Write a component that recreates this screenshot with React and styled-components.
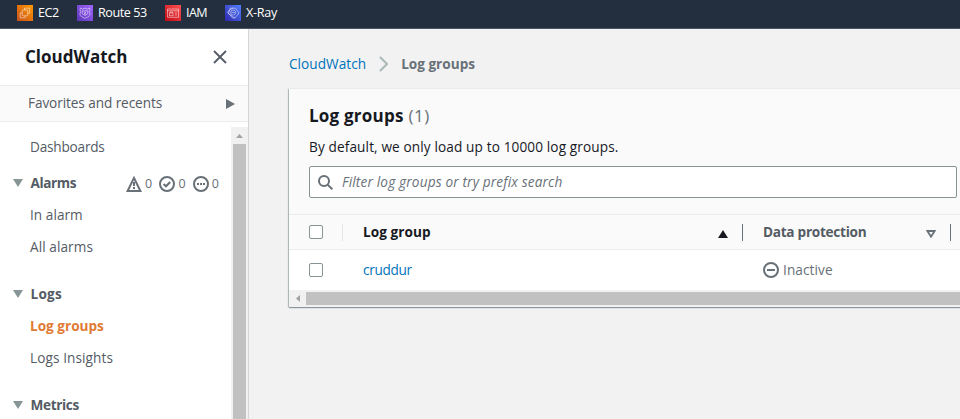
import React from 'react';
import styled, { createGlobalStyle } from 'styled-components';

const Global = createGlobalStyle`
  * { box-sizing: border-box; }
  body { margin: 0; background: #f2f2f2; overflow: hidden; font-family: "Open Sans", sans-serif; }
`;

const Page = styled.div`
  display: flex;
  flex-direction: column;
  width: 960px;
  height: 419px;
  overflow: hidden;
  font-size: 13.6px;
  line-height: 20px;
  color: #16191f;
`;
const Text = styled.span`
  white-space: nowrap;
  letter-spacing: ${(p) => p.$track || 0}px;
`;
const TopBar = styled.nav`
  display: flex;
  flex: 0 0 29px;
  padding: 3px 0 0 17px;
  background: #232f3e;
  border-bottom: 1px solid #4f5566;
  color: #fff;
  font-size: 12.6px;
`;
const Service = styled.div`
  display: flex;
  align-items: center;
  gap: 5px;
  height: 20px;
  width: ${(p) => p.$width}px;
`;
const Body = styled.div`
  display: flex;
  flex: 1;
  min-height: 0;
`;
const Sidebar = styled.aside`
  display: flex;
  flex-direction: column;
  flex: 0 0 249px;
  background: #fff;
  border-right: 1px solid #d5d8d8;
`;
const SideHeader = styled.header`
  display: flex;
  align-items: center;
  justify-content: space-between;
  flex: 0 0 57px;
  padding: 0 21px 1px 25px;
  border-bottom: 1px solid #eaeded;
`;
const SideTitle = styled.h2`
  margin: 0;
  font-size: 17px;
  line-height: 24px;
`;
const Favorites = styled.div`
  display: flex;
  align-items: center;
  justify-content: space-between;
  flex: 0 0 36px;
  padding: 0 13px 0 28px;
  background: #fafafa;
  border-bottom: 1px solid #eaeded;
  color: #545b64;
`;
const FavoritesLabel = styled(Text)`
  padding-bottom: 2px;
`;
const SideScroll = styled.div`
  display: flex;
  flex: 1;
  min-height: 0;
`;
const NavList = styled.div`
  width: 231px;
  padding-top: 15px;
  color: #545b64;
`;
const NavGroup = styled.section`
  display: flex;
  flex-direction: column;
  gap: 12px;
  margin-bottom: ${(p) => p.$after}px;
`;
const NavItem = styled.div`
  display: flex;
  align-items: center;
  height: 20px;
  padding-left: 30px;
  font-weight: ${(p) => (p.$active ? 700 : 400)};
  color: ${(p) => (p.$active ? '#e07a35' : '#545b64')};
`;
const NavHeading = styled(NavItem)`
  padding-left: 13px;
  gap: 7.5px;
  font-weight: 700;
`;
const AlarmCounts = styled.div`
  display: flex;
  margin-left: auto;
  padding: 2px 5px 0 0;
  font-size: 12.5px;
  font-weight: 400;
  color: #687078;
`;
const AlarmCount = styled.span`
  display: flex;
  align-items: center;
  gap: 3px;
  width: 33.3px;
`;
const VerticalScroll = styled.div`
  display: flex;
  flex-direction: column;
  align-items: center;
  width: 17px;
  margin-top: 5px;
  background: #f1f1f1;
`;
const VerticalArrow = styled.div`
  display: flex;
  align-items: center;
  height: 17px;
`;
const VerticalThumb = styled.div`
  flex: 1;
  width: 13px;
  background: #c1c1c1;
`;
const Main = styled.main`
  flex: 1;
  min-width: 0;
  padding: 25px 0 0 40px;
  background: #f2f2f2;
`;
const Breadcrumbs = styled.div`
  display: flex;
  align-items: center;
  height: 20px;
`;
const Link = styled(Text)`
  color: #0073bb;
`;
const Chevron = styled.svg`
  margin: 0 12px 0 13px;
`;
const Current = styled(Text)`
  font-weight: 700;
  color: #687078;
`;
const Panel = styled.section`
  width: 700px;
  height: 218px;
  margin-top: 15px;
  background: #fafafa;
  box-shadow: 0 1px 1px rgba(0, 28, 36, 0.4), -1px 0 1px rgba(0, 28, 36, 0.22);
`;
const PanelHeader = styled.div`
  height: 126px;
  padding: 15px 0 0 20px;
  border-bottom: 1px solid #eaeded;
`;
const Title = styled.h1`
  display: flex;
  gap: 5px;
  margin: 0;
  font-size: 17px;
  line-height: 24px;
`;
const Count = styled(Text)`
  font-weight: 400;
  color: #687078;
`;
const Description = styled.p`
  margin: 9px 0;
`;
const Search = styled.div`
  display: flex;
  align-items: center;
  gap: 9px;
  width: 648px;
  height: 32px;
  padding-left: 8px;
  border: 1px solid #879596;
  border-radius: 2px;
  background: #fff;
  color: #687078;
  font-style: italic;
`;
const Row = styled.div`
  display: grid;
  grid-template-columns: 54px 400px 208px 1fr;
  align-items: center;
  height: ${(p) => (p.$head ? 35 : 40)}px;
  border-bottom: ${(p) => (p.$head ? '1px solid #eaeded' : '0')};
  background: ${(p) => (p.$head ? '#fafafa' : '#fff')};
`;
const SelectCell = styled.div`
  display: flex;
  align-items: center;
  justify-content: space-between;
  height: 17px;
  padding-left: 20px;
  border-right: 1px solid ${(p) => (p.$divided ? '#e3e7e7' : 'transparent')};
`;
const Checkbox = styled.span`
  width: 14px;
  height: 14px;
  border: 1px solid #879596;
  border-radius: 2px;
  background: #fff;
`;
const HeadCell = styled.div`
  display: flex;
  align-items: center;
  justify-content: space-between;
  height: 17px;
  padding: 0 14px 0 20px;
  border-right: 1px solid #687078;
  font-weight: 700;
  color: ${(p) => (p.$sorted ? '#16191f' : '#545b64')};
`;
const SortIcon = styled.svg`
  margin-top: 3px;
`;
const Cell = styled.div`
  display: flex;
  align-items: center;
  gap: 4px;
  padding-left: 20px;
  color: #687078;
`;
const HorizontalScroll = styled.div`
  display: flex;
  align-items: center;
  height: 17px;
  background: #f1f1f1;
`;
const HorizontalArrow = styled.div`
  display: flex;
  justify-content: center;
  width: 17px;
`;
const HorizontalThumb = styled.div`
  flex: 1;
  height: 13px;
  background: #c1c1c1;
`;

const glyphs = {
  ec2: (
    <>
      <rect x="5.2" y="5" width="5.6" height="5.8" rx="1" />
      <path d="M7.5 3.2h5.2v5M12.7 8.2h-2M3.2 8v4.8h5v-2M7.5 3.2v1.8M3.2 8h2" />
    </>
  ),
  route: (
    <path d="M3.5 3l2 1 2.5-.8 2.5.8 2-1 .6 1.8-.8 1.4.8 2.8c0 2-2 3-5.1 4.3C4.900 12 2.900 11 2.900 9l.8-2.800-.8-1.400zM5.200 5.800h5.600M5.200 5.800v3L8 10.500l2.800-1.700v-3M7 7.200h2L7 9h2" />
  ),
  iam: (
    <>
      <path d="M2.500 4h11v8.300h-11zM2.500 5.800h11M9.800 8h2.200M9.800 10h2.200" />
      <rect x="4.500" y="8" width="3.500" height="2.800" />
      <path d="M5.300 8V6.900h2V8" />
    </>
  ),
  xray: (
    <>
      <path d="M5 3.200h5.500L14 8l-4 5-6.500-4.500zM2.500 7L8 2.800M2.500 7l5 6H10" />
      <circle cx="8.200" cy="7.500" r="2.500" />
      <path d="M6.500 7.500h3.500" />
    </>
  ),
};

function ServiceIcon({ name, from, to }) {
  return (
    <svg width="16" height="16" viewBox="0 0 16 16">
      <defs>
        <linearGradient id={name} x1="0" y1="1" x2="1" y2="0">
          <stop stopColor={from} />
          <stop offset="1" stopColor={to} />
        </linearGradient>
      </defs>
      <path fill={`url(#${name})`} d="M0 0h16v16H0z" />
      <g fill="none" stroke="#fff" strokeOpacity=".75" strokeWidth=".65">{glyphs[name]}</g>
    </svg>
  );
}

const services = [
  { name: 'ec2', label: 'EC2', from: '#c8511b', to: '#f90', width: 60, track: -0.45 },
  { name: 'route', label: 'Route 53', from: '#5b35b8', to: '#a166ff', width: 88, track: -0.45 },
  { name: 'iam', label: 'IAM', from: '#bd0816', to: '#ff5252', width: 60, track: -0.6 },
  { name: 'xray', label: 'X-Ray', from: '#2e27ad', to: '#527fff', width: 60, track: -0.3 },
];

const Caret = () => (
  <svg width="10" height="8" viewBox="0 0 10 8"><path fill="#879596" d="M0 0h10L5 8z" /></svg>
);

function StatusIcon({ kind }) {
  return (
    <svg width="16" height="16" viewBox="0 0 16 16" fill="none" stroke="#687078" strokeWidth="2">
      {kind === 'alarm' ? (
        <path d="M8 1.900L14.400 15H1.600zM8 6v4M8 11v2" />
      ) : (
        <circle cx="8" cy="8" r="7" />
      )}
      {kind === 'ok' && <path d="M4.600 8l2.400 2.300 4.200-4.300" />}
      {kind === 'pending' && <path d="M4 8h2M7 8h2M10 8h2" />}
      {kind === 'inactive' && <path d="M4 8h8" />}
    </svg>
  );
}

export default function App() {
  return (
    <Page>
      <Global />
      <TopBar>
        {services.map((s) => (
          <Service key={s.name} $width={s.width}>
            <ServiceIcon name={s.name} from={s.from} to={s.to} />
            <Text $track={s.track}>{s.label}</Text>
          </Service>
        ))}
      </TopBar>
      <Body>
        <Sidebar>
          <SideHeader>
            <SideTitle><Text>CloudWatch</Text></SideTitle>
            <svg width="14" height="14" viewBox="0 0 14 14" stroke="#545b64" strokeWidth="1.800">
              <path d="M1 1l12 12M13 1L1 13" />
            </svg>
          </SideHeader>
          <Favorites>
            <FavoritesLabel $track={-0.08}>Favorites and recents</FavoritesLabel>
            <svg width="9" height="10" viewBox="0 0 9 10"><path fill="#687078" d="M0 0l9 5-9 5z" /></svg>
          </Favorites>
          <SideScroll>
            <NavList>
              <NavGroup $after={16}>
                <NavItem><Text $track={-0.2}>Dashboards</Text></NavItem>
              </NavGroup>
              <NavGroup $after={27}>
                <NavHeading>
                  <Caret />
                  <Text $track={-0.4}>Alarms</Text>
                  <AlarmCounts>
                    <AlarmCount><StatusIcon kind="alarm" />0</AlarmCount>
                    <AlarmCount><StatusIcon kind="ok" />0</AlarmCount>
                    <AlarmCount><StatusIcon kind="pending" />0</AlarmCount>
                  </AlarmCounts>
                </NavHeading>
                <NavItem><Text $track={0.05}>In alarm</Text></NavItem>
                <NavItem><Text $track={0.08}>All alarms</Text></NavItem>
              </NavGroup>
              <NavGroup $after={27}>
                <NavHeading><Caret /><Text $track={0.2}>Logs</Text></NavHeading>
                <NavItem $active><Text $track={0}>Log groups</Text></NavItem>
                <NavItem><Text $track={0.1}>Logs Insights</Text></NavItem>
              </NavGroup>
              <NavHeading><Caret /><Text $track={-0.35}>Metrics</Text></NavHeading>
            </NavList>
            <VerticalScroll>
              <VerticalArrow>
                <svg width="7" height="4" viewBox="0 0 7 4"><path fill="#a3a3a3" d="M0 4l3.500-4L7 4z" /></svg>
              </VerticalArrow>
              <VerticalThumb />
            </VerticalScroll>
          </SideScroll>
        </Sidebar>
        <Main>
          <Breadcrumbs>
            <Link $track={0.05}>CloudWatch</Link>
            <Chevron width="10" height="16" viewBox="0 0 10 16" fill="none" stroke="#aab7b8" strokeWidth="2">
              <path d="M1 1l7 7-7 7" />
            </Chevron>
            <Current $track={0}>Log groups</Current>
          </Breadcrumbs>
          <Panel>
            <PanelHeader>
              <Title>
                <Text $track={0.22}>Log groups</Text>
                <Count $track={0.5}>(1)</Count>
              </Title>
              <Description>
                <Text $track={0.13}>By default, we only load up to 10000 log groups.</Text>
              </Description>
              <Search>
                <svg width="15" height="15" viewBox="0 0 15 15" fill="none" stroke="#687078" strokeWidth="2">
                  <circle cx="6" cy="6" r="5" />
                  <path d="M9.600 9.600l4.700 4.700" />
                </svg>
                <Text $track={0.17}>Filter log groups or try prefix search</Text>
              </Search>
            </PanelHeader>
            <Row $head>
              <SelectCell $divided><Checkbox /></SelectCell>
              <HeadCell $sorted>
                <Text $track={0.05}>Log group</Text>
                <SortIcon width="10" height="8" viewBox="0 0 10 8"><path fill="#16191f" d="M5 0l5 8H0z" /></SortIcon>
              </HeadCell>
              <HeadCell>
                <Text $track={-0.27}>Data protection</Text>
                <SortIcon width="10" height="8" viewBox="0 0 10 8" fill="none" stroke="#687078" strokeWidth="1.800">
                  <path d="M1.400 1h7.200L5 6.700z" />
                </SortIcon>
              </HeadCell>
            </Row>
            <Row>
              <SelectCell><Checkbox /></SelectCell>
              <Cell><Link $track={-0.3}>cruddur</Link></Cell>
              <Cell><StatusIcon kind="inactive" /><Text $track={0.1}>Inactive</Text></Cell>
            </Row>
            <HorizontalScroll>
              <HorizontalArrow>
                <svg width="4" height="7" viewBox="0 0 4 7"><path fill="#a3a3a3" d="M4 0v7L0 3.500z" /></svg>
              </HorizontalArrow>
              <HorizontalThumb />
            </HorizontalScroll>
          </Panel>
        </Main>
      </Body>
    </Page>
  );
}
